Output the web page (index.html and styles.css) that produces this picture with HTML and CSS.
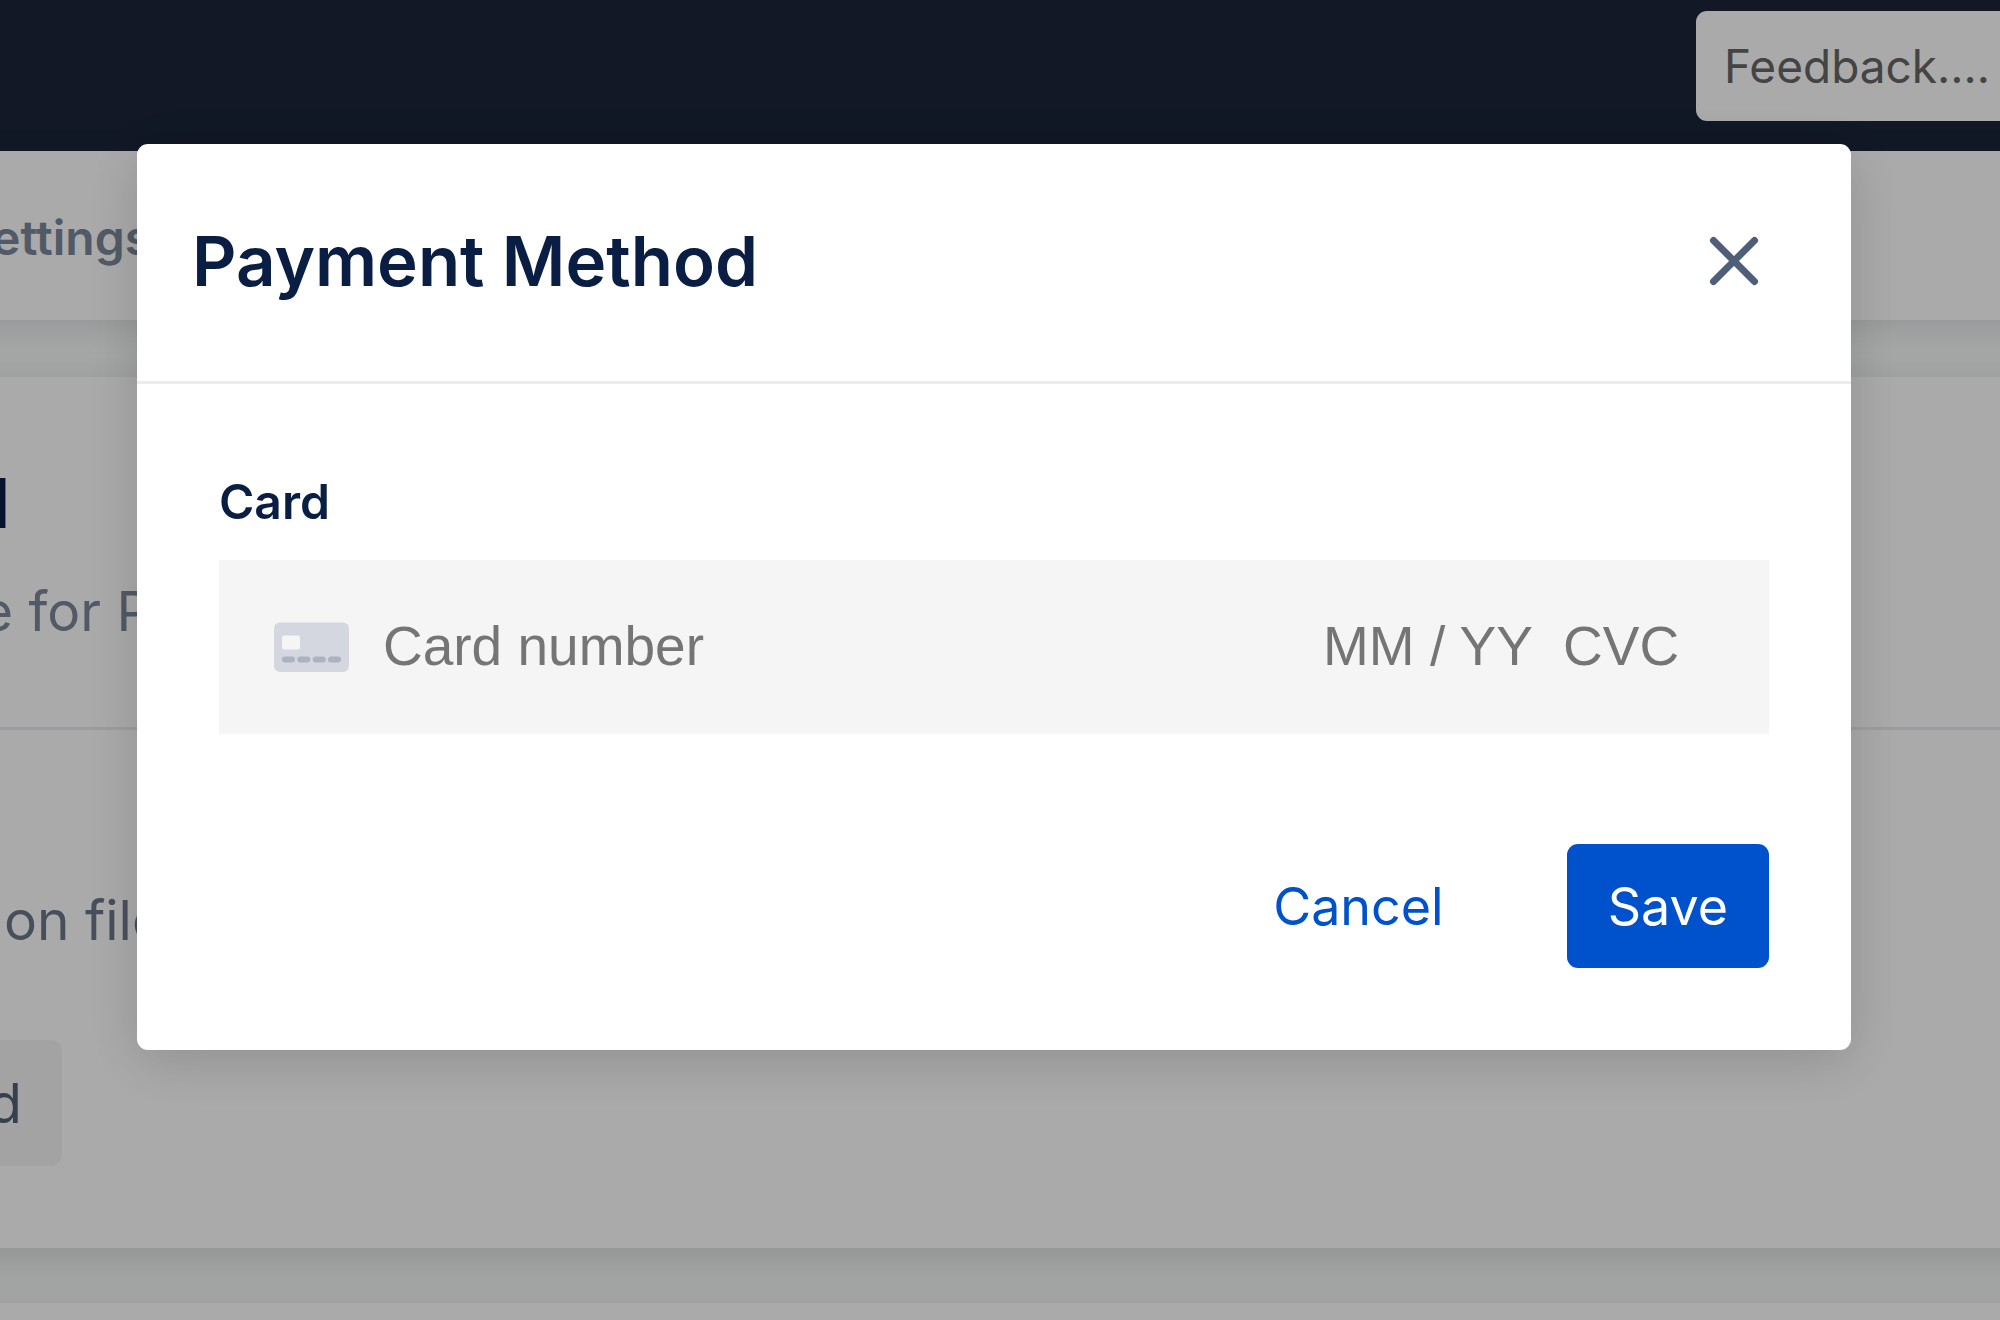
FILE: index.html
```html
<!DOCTYPE html>
<html lang="en">
<head>
<meta charset="utf-8">
<title>Payment Method</title>
<meta name="viewport" content="width=device-width, initial-scale=1">
<link rel="stylesheet" href="styles.css">
</head>
<body>
<div class="page">
  <header class="navbar">
    <input class="feedback" type="text" placeholder="Feedback...." aria-label="Feedback">
  </header>
  <nav class="tabs"><a class="tab" href="#settings">ettings</a></nav>
  <main class="content">
    <section class="panel">
      <div class="panel-head">
        <h2 class="panel-title">d</h2>
        <p class="panel-text">e for P</p>
      </div>
      <div class="panel-body">
        <p class="panel-status">on file</p>
        <button class="panel-button" type="button">d</button>
      </div>
    </section>
    <section class="panel panel-next"></section>
  </main>
</div>

<div class="overlay">
  <form class="dialog" role="dialog" aria-labelledby="dialog-title">
    <div class="dialog-head">
      <h1 class="dialog-title" id="dialog-title">Payment Method</h1>
      <button class="close" type="button" aria-label="Close">
        <svg width="50" height="50" viewBox="0 0 50 50" fill="none" stroke="#505f79" stroke-width="7" stroke-linecap="round"><path d="M4.500 4.500 45.500 45.500M45.500 4.500 4.500 45.500"/></svg>
      </button>
    </div>
    <div class="dialog-body">
      <label class="label" for="card-number">Card</label>
      <div class="card-field">
        <svg class="card-icon" width="75" height="50" viewBox="0 0 75 50">
          <rect y="0.500" width="75" height="49.500" rx="6" fill="#d4d7df"/>
          <rect x="8" y="13.500" width="18" height="14" rx="2" fill="#f5f5f5"/>
          <g fill="#abb2c1"><rect x="8" y="34.500" width="13" height="6" rx="3"/><rect x="23.300" y="34.500" width="13" height="6" rx="3"/><rect x="38.700" y="34.500" width="13" height="6" rx="3"/><rect x="54" y="34.500" width="13" height="6" rx="3"/></g>
        </svg>
        <input class="card-input number" id="card-number" type="text" placeholder="Card number">
        <input class="card-input expiry" type="text" placeholder="MM / YY" aria-label="Expiry date">
        <input class="card-input cvc" type="text" placeholder="CVC" aria-label="CVC">
      </div>
      <div class="actions">
        <button class="button button-link" type="button">Cancel</button>
        <button class="button button-primary" type="submit">Save</button>
      </div>
    </div>
  </form>
</div>
</body>
</html>
```
FILE: styles.css
```css
* { box-sizing: border-box; }
body {
  margin: 0;
  font-family: Inter, "Liberation Sans", sans-serif;
  overflow: hidden;
}
h1, h2, p { margin: 0; }
button, input { font: inherit; border: 0; margin: 0; }

.page {
  min-height: 100vh;
  overflow: hidden;
  background: #f8fbfa;
  display: flex;
  flex-direction: column;
}

.navbar {
  height: 151px;
  padding-top: 11px;
  background: #1b2539;
  display: flex;
  justify-content: flex-end;
  align-items: flex-start;
}
.feedback {
  width: 304px;
  height: 110px;
  padding: 0 0 0 28px;
  border-radius: 11px 0 0 11px;
  background: #fff;
  font-size: 46px;
}
.feedback::placeholder { color: #666; opacity: 1; }

.tabs {
  height: 169px;
  margin: 0 -60px;
  padding: 4px 60px 0;
  background: #fff;
  box-shadow: 0 6px 28px rgba(30, 30, 60, .12);
  display: flex;
  align-items: center;
}
.tab {
  margin-left: -8px;
  line-height: 60px;
  font-size: 48px;
  font-weight: 600;
  color: #7a8799;
  text-decoration: none;
}

.content {
  flex: 1;
  padding-top: 57px;
  display: flex;
  flex-direction: column;
  gap: 55px;
}
.panel {
  margin: 0 -60px;
  padding: 0 60px;
  background: #fff;
  box-shadow: 0 11px 36px rgba(30, 40, 40, .15);
}
.panel-head {
  height: 353px;
  margin: 0 -60px;
  padding: 86px 60px 0;
  border-bottom: 3px solid #ebecf0;
}
.panel-title {
  margin-left: -33px;
  line-height: 80px;
  font-size: 69px;
  font-weight: 600;
  color: #091e42;
}
.panel-text {
  margin: 32px 0 0 -19px;
  line-height: 72px;
  font-size: 55px;
  color: #7a8799;
}
.panel-body {
  padding: 154px 0 82px;
}
.panel-status {
  margin: 0 0 84px 4px;
  line-height: 72px;
  font-size: 55px;
  color: #6b778c;
}
.panel-button {
  display: block;
  width: 78px;
  height: 126px;
  margin-left: -16px;
  padding: 0 40px 0 0;
  border-radius: 11px;
  background: #f5f5f5;
  text-align: right;
  font-size: 55px;
  color: #505f79;
}
.panel-next { flex: 1; }

.overlay {
  position: fixed;
  inset: 0;
  z-index: 10;
  padding: 144px 149px 0 137px;
  background: rgba(0, 0, 0, .333);
}
.dialog {
  border-radius: 11px;
  background: #fff;
  box-shadow: 0 11px 55px rgba(0, 0, 0, .16);
}
.dialog-head {
  padding: 77px 92px 80px 55px;
  border-bottom: 3px solid #ebecf0;
  display: flex;
  justify-content: space-between;
  align-items: center;
}
.dialog-title {
  line-height: 80px;
  font-size: 69px;
  font-weight: 600;
  color: #091e42;
}
.close {
  display: flex;
  padding: 0;
  background: none;
}
.dialog-body {
  padding: 88px 82px;
  padding-bottom: 82px;
}
.label {
  display: block;
  margin-bottom: 28px;
  line-height: 60px;
  font-size: 48px;
  font-weight: 600;
  color: #091e42;
}
.card-field {
  height: 174px;
  padding: 0 53px 0 55px;
  background: #f5f5f5;
  display: flex;
  align-items: center;
}
.card-icon { flex: none; }
.card-input {
  min-width: 0;
  height: 74px;
  padding: 0 0 2px;
  background: none;
  font-family: "Liberation Sans", Arial, sans-serif;
  font-size: 55px;
}
.card-input::placeholder { color: #757575; opacity: 1; }
.number { flex: 1; margin-left: 34px; }
.expiry { width: 240px; }
.cvc { width: 153px; }

.actions {
  margin-top: 110px;
  display: flex;
  justify-content: flex-end;
  gap: 82px;
}
.button {
  height: 124px;
  padding: 0 41px;
  border-radius: 11px;
  font-size: 52px;
}
.button-link { background: none; color: #0052cc; }
.button-primary { background: #0052cc; color: #fff; }
```
